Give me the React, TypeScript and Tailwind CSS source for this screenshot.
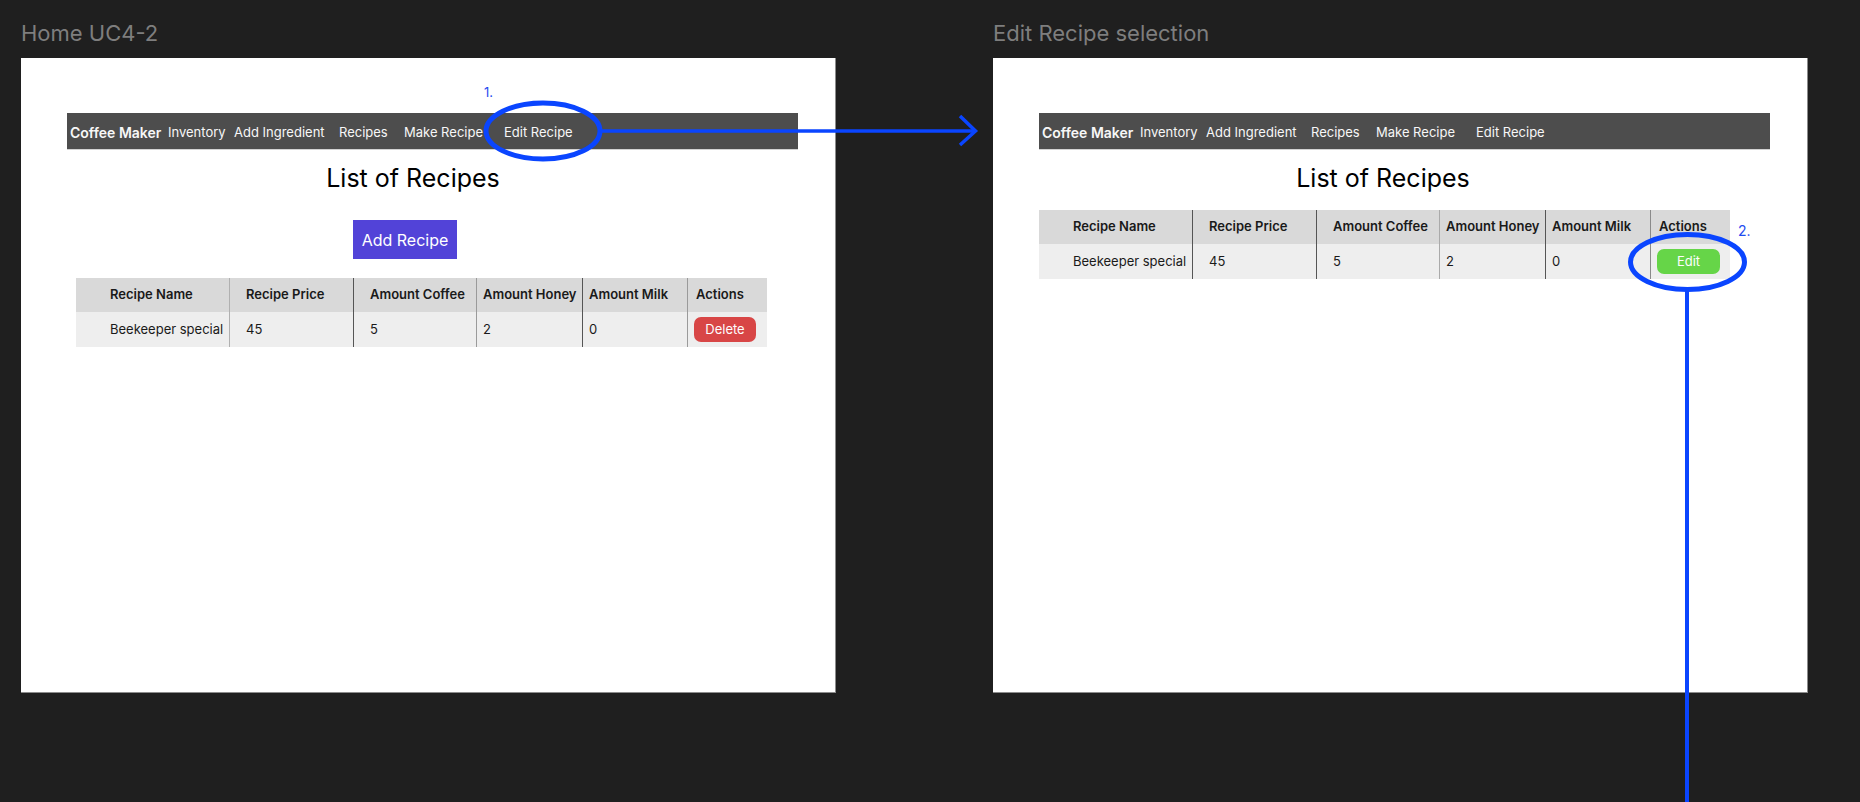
import React from 'react';

const colW = ['w-[153px]', 'w-[124px]', 'w-[123px]', 'w-[106px]', 'w-[105px]', 'w-[80px]'];
const padH = ['pl-[34px]', 'pl-[16px]', 'pl-[16px]', 'pl-[6px]', 'pl-[6px]', 'pl-[8px]'];
const padR = ['pl-[34px]', 'pl-[16px]', 'pl-[16px]', 'pl-[6px]', 'pl-[6px]', 'pl-[6px]'];

function RecipeTable({ borders, action }: { borders: string[]; action: 'delete' | 'edit' }) {
  const headers = ['Recipe Name', 'Recipe Price', 'Amount Coffee', 'Amount Honey', 'Amount Milk', 'Actions'];
  const values = ['Beekeeper special', '45', '5', '2', '0'];
  return (
    <div className="flex flex-col w-[691px]">
      <div className="flex h-[34px] bg-[#d9d9d9]">
        {headers.map((h, i) => (
          <div
            key={h}
            className={`${colW[i]} ${padH[i]} ${borders[i]} flex items-center text-[13px] font-semibold text-[#1a1a1a] whitespace-nowrap`}
          >
            {h}
          </div>
        ))}
      </div>
      <div className="flex h-[35px] bg-[#eeeeee]">
        {values.map((v, i) => (
          <div
            key={i}
            className={`${colW[i]} ${padR[i]} ${borders[i]} flex items-center text-[13px] text-[#1a1a1a] whitespace-nowrap`}
          >
            {v}
          </div>
        ))}
        <div className={`${colW[5]} ${padR[5]} ${borders[5]} flex items-center`}>
          {action === 'delete' ? (
            <div className="w-[62px] h-[25px] rounded-[7px] bg-[#d84646] text-[#fdfdfd] text-[13px] flex items-center justify-center">
              Delete
            </div>
          ) : (
            <div className="w-[63px] h-[25px] rounded-[7px] bg-[#66d548] text-[#fdfdfd] text-[13px] flex items-center justify-center">
              Edit
            </div>
          )}
        </div>
      </div>
    </div>
  );
}

function NavBar() {
  return (
    <div className="mt-[55px] ml-[46px] w-[731px] h-[37px] pt-[3px] bg-[#4d4d4d] border-b border-[#d2d2d2] flex items-center pl-[3px] text-[#f7f7f7] whitespace-nowrap">
      <span className="w-[98px] text-[14px] font-semibold">Coffee Maker</span>
      <span className="w-[66px] text-[13px]">Inventory</span>
      <span className="w-[105px] text-[13px]">Add Ingredient</span>
      <span className="w-[65px] text-[13px]">Recipes</span>
      <span className="w-[100px] text-[13px]">Make Recipe</span>
      <span className="text-[13px]">Edit Recipe</span>
    </div>
  );
}

function Frame({ title, children }: { title: string; children: React.ReactNode }) {
  return (
    <div className="flex flex-col w-[815px] shrink-0">
      <div className="pt-[20px] h-[47px] text-[22px] leading-[27px] text-[#7e7e7e] whitespace-nowrap">{title}</div>
      <div className="mt-[11px] h-[635px] bg-white border-r border-b border-[#8c8c8c] flex flex-col items-start">
        {children}
      </div>
    </div>
  );
}

export default function App() {
  return (
    <div className="relative w-[1860px] h-[802px] overflow-hidden bg-[#1f1f1f] flex pl-[21px] gap-[157px] font-['Inter','Noto_Sans',sans-serif]">
      <Frame title="Home UC4-2">
        <NavBar />
        <div className="mt-[13px] w-[784px] text-center text-[25px] leading-[30px] text-black">List of Recipes</div>
        <div className="mt-[27px] ml-[332px] w-[104px] h-[39px] bg-[#5243d8] text-white text-[16px] flex items-center justify-center">
          Add Recipe
        </div>
        <div className="mt-[19px] ml-[55px]">
          <RecipeTable
            action="delete"
            borders={['', 'border-l border-[#b0b0b0]', 'border-l border-[#555555]', 'border-l border-[#9a9a9a]', 'border-l border-[#555555]', 'border-l border-[#9a9a9a]']}
          />
        </div>
      </Frame>
      <Frame title="Edit Recipe selection">
        <NavBar />
        <div className="mt-[13px] w-[780px] text-center text-[25px] leading-[30px] text-black">List of Recipes</div>
        <div className="mt-[17px] ml-[46px]">
          <RecipeTable
            action="edit"
            borders={['', 'border-l border-[#555555]', 'border-l border-[#555555]', 'border-l border-[#aaaaaa]', 'border-l border-[#555555]', 'border-l border-[#8a8a8a]']}
          />
        </div>
      </Frame>

      <div className="absolute left-[484px] top-[84px] text-[13px] leading-[16px] text-[#1f4cf0]">1.</div>
      <div className="absolute left-[1738px] top-[222px] text-[14px] leading-[17px] text-[#1f4cf0]">2.</div>

      <svg className="absolute left-0 top-0 pointer-events-none" width="1860" height="802" viewBox="0 0 1860 802">
        <ellipse cx="543" cy="131" rx="57" ry="28" fill="none" stroke="#0a45ff" strokeWidth="5" />
        <line x1="600" y1="131" x2="975" y2="131" stroke="#0a45ff" strokeWidth="3.5" />
        <polyline points="960,116 975.5,131 960,145" fill="none" stroke="#0a45ff" strokeWidth="3.5" />
        <ellipse cx="1687.5" cy="262" rx="57" ry="27.5" fill="none" stroke="#0a45ff" strokeWidth="5" />
        <line x1="1687" y1="289" x2="1687" y2="802" stroke="#0a45ff" strokeWidth="4" />
      </svg>
    </div>
  );
}
